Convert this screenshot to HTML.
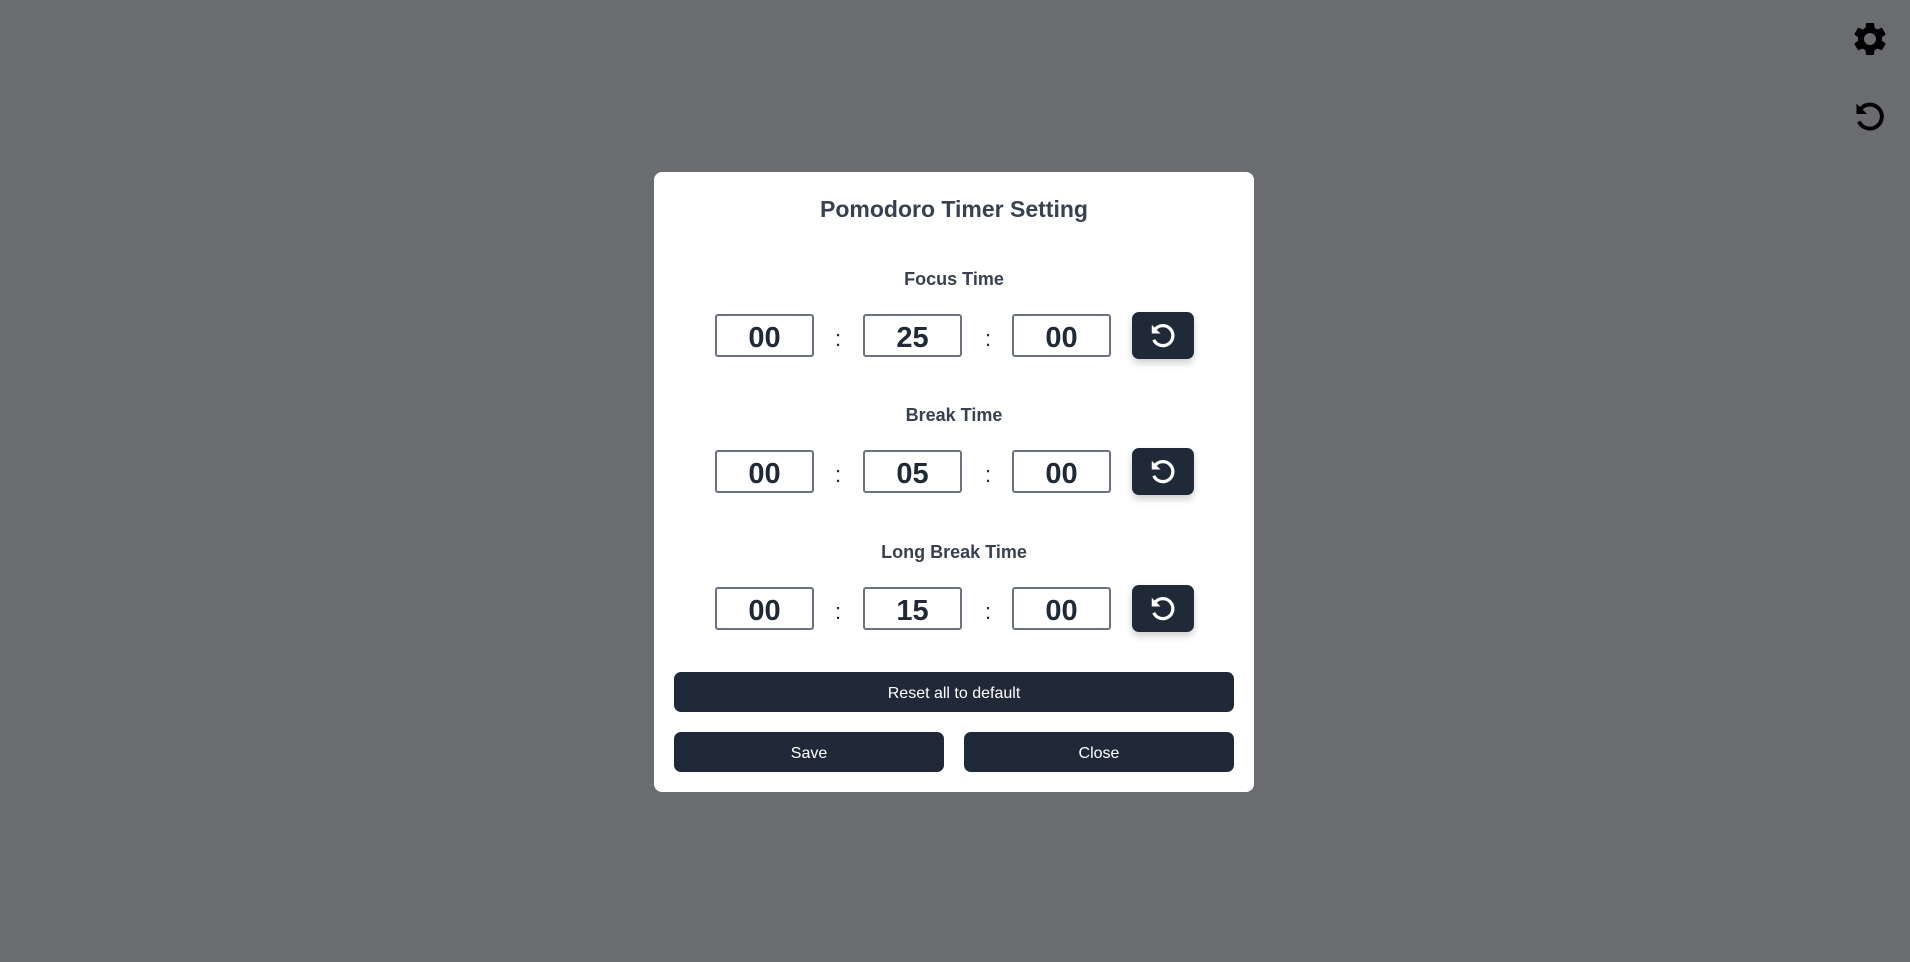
<!DOCTYPE html>
<html><head><meta charset="utf-8"><style>
*{box-sizing:border-box;margin:0;padding:0}
body{width:1910px;height:962px;background:#6b6c70;position:relative;overflow:hidden;font-family:"Liberation Sans",sans-serif}
.abs{position:absolute}
.modal{left:654px;top:172px;width:600px;height:620px;background:#fff;border-radius:8px}
.title{left:654px;width:600px;top:196px;text-align:center;font-size:23px;font-weight:bold;color:#374151}
.lbl{left:654px;width:600px;text-align:center;font-size:18px;font-weight:bold;color:#374151}
.inp{width:99px;height:43px;border:2px solid #6b7280;border-radius:3px;text-align:center;font-size:29px;font-weight:bold;color:#1f2937;line-height:45px}
.col{font-size:22px;color:#1f2937;width:10px;text-align:center}
.rb{left:1132px;width:62px;height:47px;background:#1f2937;border-radius:7px;box-shadow:0 4px 8px rgba(0,0,0,.2);display:flex;align-items:center;justify-content:center}
.btn{background:#1f2937;color:#fff;border-radius:7px;font-size:16px;display:flex;align-items:center;justify-content:center;padding-top:3px}
</style></head><body>
<svg class="abs" style="left:1850px;top:19px" width="40" height="40" viewBox="0 0 24 24"><path fill="#000" d="M19.14 12.94c.04-.3.06-.61.06-.94s-.02-.64-.07-.94l2.030-1.58a.49.49 0 0 0 .12-.61l-1.92-3.32a.49.49 0 0 0-.59-.22l-2.39.96c-.5-.38-1.03-.7-1.62-.94l-.36-2.54a.48.48 0 0 0-.48-.41h-3.84a.48.48 0 0 0-.47.41l-.36 2.54c-.59.24-1.13.57-1.62.94l-2.39-.96a.48.48 0 0 0-.59.22L2.74 8.87a.47.47 0 0 0 .12.61l2.03 1.58c-.05.3-.09.63-.09.94s.02.64.07.94l-2.03 1.58a.49.49 0 0 0-.12.61l1.92 3.32c.12.22.37.29.59.22l2.39-.96c.5.38 1.03.7 1.620.94l.36 2.54c.05.24.24.41.48.41h3.84c.24 0 .44-.17.47-.41l.36-2.54c.59-.24 1.13-.56 1.62-.94l2.39.96c.22.08.47 0 .59-.22l1.92-3.32a.47.47 0 0 0-.12-.61l-2.01-1.58zM12 15.6A3.6 3.6 0 1 1 12 8.4a3.6 3.6 0 0 1 0 7.2z"/></svg>
<svg class="abs" style="left:1852px;top:99px" width="36" height="36" viewBox="0 0 24 24"><path fill="none" stroke="#000" stroke-width="2.6" d="M6 6.3A8 8 0 1 1 4.6 15"/><path fill="#000" d="M3 3v7h7z"/></svg>
<div class="abs modal"></div>
<div class="abs title">Pomodoro Timer Setting</div>

<div class="abs lbl" style="top:269px">Focus Time</div>
<div class="abs inp" style="left:715px;top:314px">00</div><div class="abs col" style="left:833px;top:326px">:</div>
<div class="abs inp" style="left:863px;top:314px">25</div><div class="abs col" style="left:983px;top:326px">:</div>
<div class="abs inp" style="left:1012px;top:314px">00</div>
<div class="abs rb" style="top:312px"><svg width="30" height="30" viewBox="0 0 24 24"><path fill="none" stroke="#fff" stroke-width="2.6" d="M6 6.3A8 8 0 1 1 4.6 15"/><path fill="#fff" d="M3 3v7h7z"/></svg></div>

<div class="abs lbl" style="top:405px">Break Time</div>
<div class="abs inp" style="left:715px;top:450px">00</div><div class="abs col" style="left:833px;top:462px">:</div>
<div class="abs inp" style="left:863px;top:450px">05</div><div class="abs col" style="left:983px;top:462px">:</div>
<div class="abs inp" style="left:1012px;top:450px">00</div>
<div class="abs rb" style="top:448px"><svg width="30" height="30" viewBox="0 0 24 24"><path fill="none" stroke="#fff" stroke-width="2.6" d="M6 6.3A8 8 0 1 1 4.6 15"/><path fill="#fff" d="M3 3v7h7z"/></svg></div>

<div class="abs lbl" style="top:542px">Long Break Time</div>
<div class="abs inp" style="left:715px;top:587px">00</div><div class="abs col" style="left:833px;top:599px">:</div>
<div class="abs inp" style="left:863px;top:587px">15</div><div class="abs col" style="left:983px;top:599px">:</div>
<div class="abs inp" style="left:1012px;top:587px">00</div>
<div class="abs rb" style="top:585px"><svg width="30" height="30" viewBox="0 0 24 24"><path fill="none" stroke="#fff" stroke-width="2.6" d="M6 6.3A8 8 0 1 1 4.6 15"/><path fill="#fff" d="M3 3v7h7z"/></svg></div>

<div class="abs btn" style="left:674px;top:672px;width:560px;height:40px">Reset all to default</div>
<div class="abs btn" style="left:674px;top:732px;width:270px;height:40px">Save</div>
<div class="abs btn" style="left:964px;top:732px;width:270px;height:40px">Close</div>
</body></html>
